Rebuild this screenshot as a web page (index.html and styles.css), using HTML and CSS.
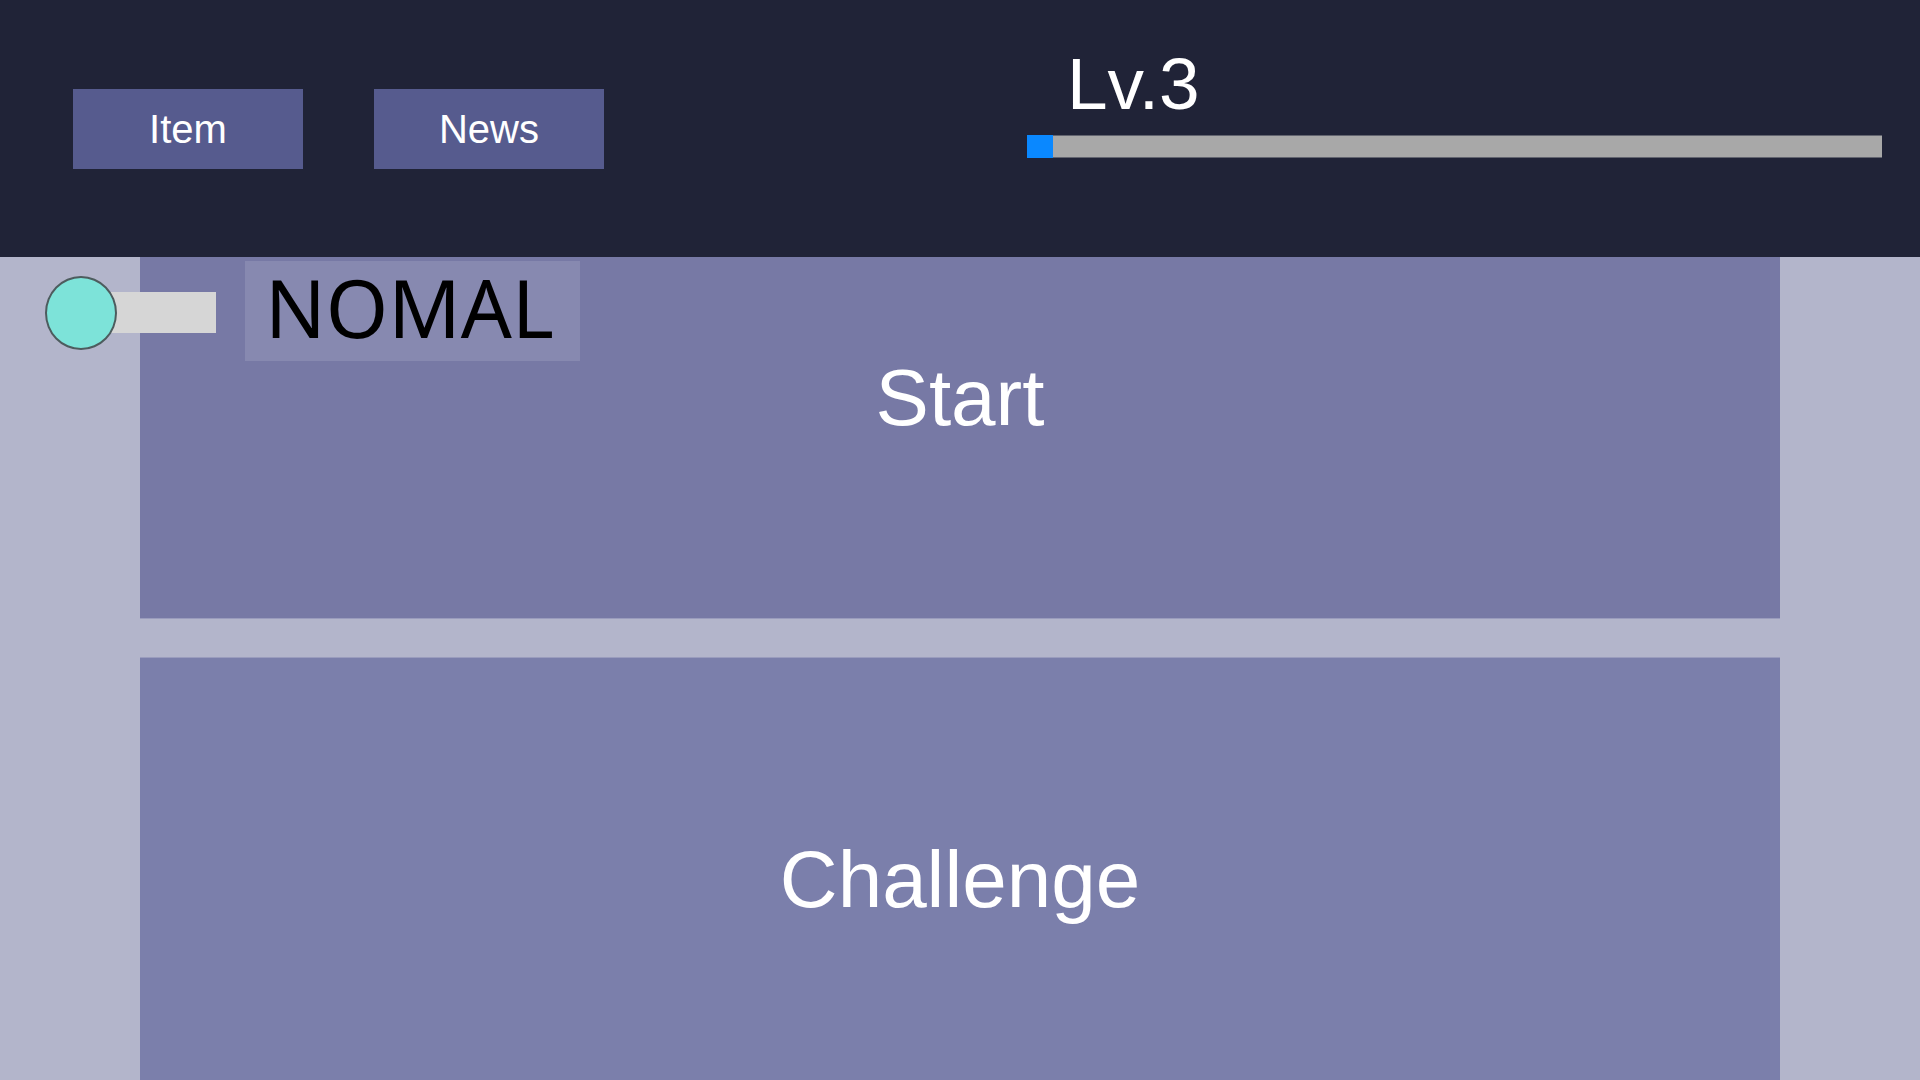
FILE: index.html
```html
<!DOCTYPE html>
<html lang="en">
<head>
<meta charset="utf-8">
<title>Menu</title>
<link rel="stylesheet" href="styles.css">
</head>
<body>
<header class="topbar">
  <nav class="tabs">
    <button class="tab">Item</button>
    <button class="tab">News</button>
  </nav>
  <div class="level">
    <div class="level-label">Lv.3</div>
    <div class="level-bar"><div class="level-fill" style="width:26px"></div></div>
  </div>
</header>
<main class="stage">
  <div class="mode">
    <div class="toggle">
      <div class="toggle-track"></div>
      <div class="toggle-knob"></div>
    </div>
    <div class="mode-label">NOMAL</div>
  </div>
  <section class="panel panel-start"><span class="panel-text">Start</span></section>
  <section class="panel panel-challenge"><span class="panel-text">Challenge</span></section>
</main>
</body>
</html>
```
FILE: styles.css
```css
* { box-sizing: border-box; }
html, body { margin: 0; padding: 0; }
body {
  width: 1920px;
  height: 1080px;
  overflow: hidden;
  font-family: "Liberation Sans", Arial, sans-serif;
  background: #b3b5cb;
}
.topbar {
  height: 257px;
  background: #202337;
  display: flex;
  justify-content: space-between;
}
.tabs {
  display: flex;
  gap: 71px;
  padding: 89px 0 0 73px;
  align-items: flex-start;
}
.tab {
  width: 230px;
  height: 80px;
  border: 0;
  margin: 0;
  padding: 0;
  background: #565b8e;
  color: #ffffff;
  font-family: "Liberation Sans", Arial, sans-serif;
  font-size: 40px;
  line-height: 80px;
}
.level {
  width: 855px;
  margin-right: 38px;
  padding-top: 47px;
}
.level-label {
  color: #ffffff;
  font-size: 73px;
  line-height: 73px;
  padding-left: 40px;
}
.level-bar {
  margin-top: 15px;
  height: 23px;
  background: #a8a8a8;
  box-shadow: inset 0 1px 0 #62646f, inset 0 -1px 0 #62646f;
}
.level-fill {
  height: 23px;
  background: #0a88ff;
}
.stage {
  position: relative;
  height: 823px;
  display: flex;
  flex-direction: column;
  gap: 40px;
  padding: 0 140px;
}
.panel {
  color: #ffffff;
  font-size: 80px;
  line-height: 80px;
  text-align: center;
}
.panel-start {
  height: 361px;
  background: #7779a5;
  padding-top: 101px;
  box-shadow: 0 1px 0 #9a9cbd;
}
.panel-challenge {
  flex: 1;
  background: #7b7fab;
  padding-top: 182px;
  box-shadow: 0 -1px 0 #9a9cbd;
}
.mode {
  position: absolute;
  left: 45px;
  top: 4px;
  width: 535px;
  height: 100px;
  z-index: 2;
}
.toggle {
  position: absolute;
  left: 0;
  top: 15px;
  width: 171px;
  height: 74px;
}
.toggle-track {
  position: absolute;
  left: 36px;
  top: 16px;
  width: 135px;
  height: 41px;
  background: #d6d6d6;
}
.toggle-knob {
  position: absolute;
  left: 0;
  top: 0;
  width: 72px;
  height: 74px;
  border-radius: 50%;
  background: #7de3d9;
  border: 2px solid #4d5c5e;
}
.mode-label {
  position: absolute;
  left: 200px;
  top: 0;
  width: 335px;
  height: 100px;
  background: #8789b0;
  color: #000000;
  font-family: "Noto Sans", "Open Sans", sans-serif;
  font-size: 80px;
  line-height: 80px;
  padding: 6px 0 0 20px;
}
```
